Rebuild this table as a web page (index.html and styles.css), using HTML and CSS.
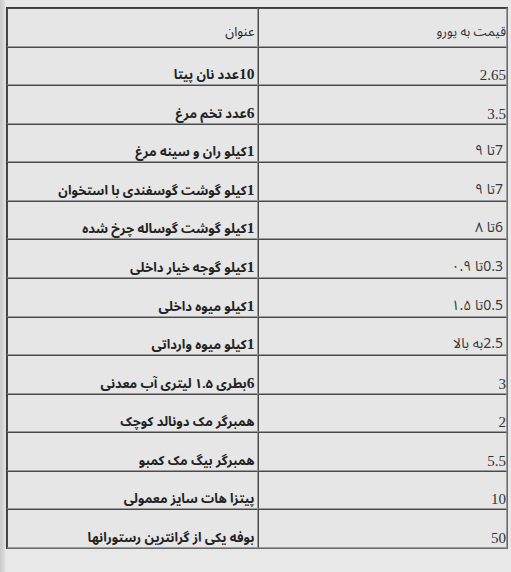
FILE: index.html
```html
<!DOCTYPE html>
<html lang="fa">
<head>
<meta charset="utf-8">
<title>قیمت ها</title>
<link rel="stylesheet" href="styles.css">
</head>
<body>
<table class="prices">
  <tr>
    <td class="title head" dir="rtl">عنوان</td>
    <td class="price head" dir="rtl">قیمت به یورو</td>
  </tr>
  <tr><td class="title" dir="rtl"><span class="num">10</span>عدد نان پیتا</td><td class="price" dir="rtl">2.65</td></tr>
  <tr><td class="title" dir="rtl"><span class="num">6</span>عدد تخم مرغ</td><td class="price" dir="rtl">3.5</td></tr>
  <tr><td class="title" dir="rtl"><span class="num">1</span>کیلو ران و سینه مرغ</td><td class="price sans" dir="rtl">7تا ۹</td></tr>
  <tr><td class="title" dir="rtl"><span class="num">1</span>کیلو گوشت گوسفندی با استخوان</td><td class="price sans" dir="rtl">7تا ۹</td></tr>
  <tr><td class="title" dir="rtl"><span class="num">1</span>کیلو گوشت گوساله چرخ شده</td><td class="price sans" dir="rtl">6تا ۸</td></tr>
  <tr><td class="title" dir="rtl"><span class="num">1</span>کیلو گوجه خیار داخلی</td><td class="price sans" dir="rtl">0.3تا ۰.۹</td></tr>
  <tr><td class="title" dir="rtl"><span class="num">1</span>کیلو میوه داخلی</td><td class="price sans" dir="rtl">0.5تا ۱.۵</td></tr>
  <tr><td class="title" dir="rtl"><span class="num">1</span>کیلو میوه وارداتی</td><td class="price sans" dir="rtl">2.5به بالا</td></tr>
  <tr><td class="title" dir="rtl"><span class="num">6</span>بطری ۱.۵ لیتری آب معدنی</td><td class="price" dir="rtl">3</td></tr>
  <tr><td class="title" dir="rtl">همبرگر مک دونالد کوچک</td><td class="price" dir="rtl">2</td></tr>
  <tr><td class="title" dir="rtl">همبرگر بیگ مک کمبو</td><td class="price" dir="rtl">5.5</td></tr>
  <tr><td class="title" dir="rtl">پیتزا هات سایز معمولی</td><td class="price" dir="rtl">10</td></tr>
  <tr><td class="title" dir="rtl">بوفه یکی از گرانترین رستورانها</td><td class="price" dir="rtl">50</td></tr>
</table>
</body>
</html>
```

FILE: styles.css
```css
html, body {
  margin: 0;
  padding: 0;
}
body {
  width: 511px;
  height: 572px;
  overflow: hidden;
  background: linear-gradient(to right, #c9c9c9 0, #d9d9d9 4px, #e8e8e8 6px, #e8e8e8 100%);
  color: #262626;
  font-family: "Liberation Serif", "Noto Sans Arabic", "DejaVu Sans", serif;
}
.prices {
  margin: 7px 0 0 6px;
  width: 502px;
  border-collapse: separate;
  border-spacing: 0;
  border: 1px solid #3c3c3c;
  border-right-color: #6a6a6a;
  border-bottom-color: #6a6a6a;
  background: #e6e6e6;
  table-layout: fixed;
}
.prices tr {
  height: 38.57px;
}
.prices td {
  width: 50%;
  text-align: right;
  vertical-align: bottom;
  border-top: 1px solid #4a4a4a;
  border-left: 1px solid #4a4a4a;
  border-bottom: 1px solid #9a9a9a;
  border-right: 1px solid #9a9a9a;
  padding: 0 0 1px 0;
  line-height: 16px;
  white-space: nowrap;
}
.title {
  font-weight: bold;
  font-size: 13px;
  color: #222;
  padding-right: 3px !important;
}
.title .num {
  font-size: 15.5px;
}
.title.head {
  font-weight: normal;
}
.price {
  font-size: 15px;
  color: #333;
  padding-right: 0 !important;
}
.head {
  font-family: "Noto Sans Arabic", "DejaVu Sans", sans-serif;
  font-size: 13px;
  padding-bottom: 6px !important;
}
.sans {
  font-family: "Noto Sans Arabic", "DejaVu Sans", sans-serif;
  font-size: 14px;
  color: #3a3a3a;
  padding-right: 3px !important;
  padding-bottom: 2px !important;
}
```
